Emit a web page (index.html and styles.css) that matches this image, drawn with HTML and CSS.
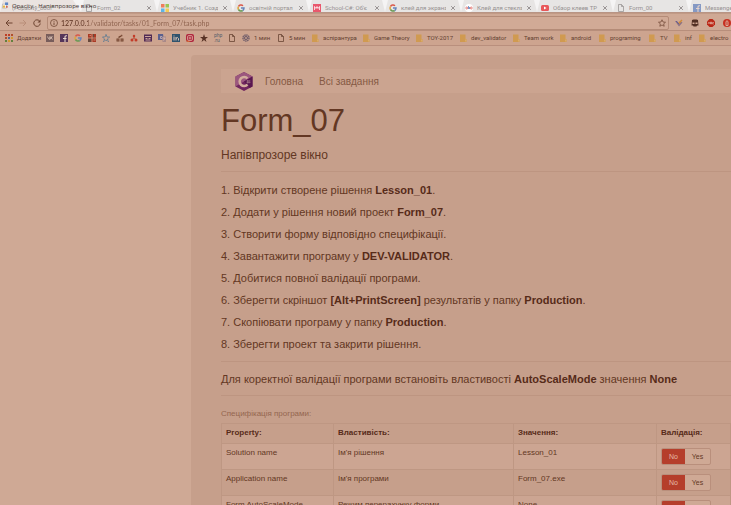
FILE: index.html
```html
<!DOCTYPE html>
<html lang="uk">
<head>
<meta charset="utf-8">
<title>Form_07</title>
<link rel="stylesheet" href="styles.css">
</head>
<body>
<svg class="defs" aria-hidden="true">
  <symbol id="google" viewBox="0 0 16 16"><g fill="none" stroke-width="3"><path d="M3 5a6 6 0 0 1 9-1.500" stroke="#d9584a"/><path d="M3 5a6 6 0 0 0 0 6" stroke="#dfa53c"/><path d="M3 11a6 6 0 0 0 8.500 2" stroke="#6b9a55"/><path d="M8 8.200h6c0 2-1 4-2.500 5" stroke="#6684ba"/></g></symbol>
  <symbol id="page" viewBox="0 0 16 16"><path d="M3 1h6l4 4v10H3zM9 1v4h4" fill="none" stroke="currentColor" stroke-width="1.500"/></symbol>
  <symbol id="folder" viewBox="0 0 16 16"><path d="M2 1h11v9h2v6H2z" fill="#d09a51"/><path d="M12 11h3v4h-3z" fill="#d9ac68"/></symbol>
  <symbol id="facebook" viewBox="0 0 16 16"><path d="M0 0h16v16H0z" fill="currentColor"/><path d="M10 16V9h3M6 9h4V6q0-3 4-2.500" fill="none" stroke="#e6d3cb" stroke-width="2.200"/></symbol>
  <symbol id="close" viewBox="0 0 8 8"><path d="M1.500 1.500l5 5m0-5l-5 5" stroke="currentColor" stroke-width="1.300"/></symbol>
</svg>

<header class="browser">
  <p class="window-title"><svg viewBox="0 0 16 16"><path d="M1 5h9v9H1z" fill="#fff" stroke="#8a8a8a"/><path d="M7 1h7v6H7z" fill="#5b86c8"/><path d="M2 8h5v5H2z" fill="#e5b541"/><path d="M9 9h4v4H9z" fill="#cf6755"/></svg>Opacity - Напівпрозоре вікно</p>
  <nav class="tabs" aria-label="Вкладки">
    <div class="tab tab-active"><span>(Popacity_bool</span></div>
    <div class="tab"><svg><use href="#page"/></svg><span>Form_02</span><button aria-label="Закрити"><svg><use href="#close"/></svg></button></div>
    <div class="tab"><svg viewBox="0 0 16 16"><path d="M0 0h7v7H0z" fill="#ef7d5a"/><path d="M9 0h7v7H9z" fill="#9cc653"/><path d="M0 9h7v7H0z" fill="#5eb5e6"/><path d="M9 9h7v7H9z" fill="#f5cb55"/></svg><span>Учебник 1. Созд</span><button aria-label="Закрити"><svg><use href="#close"/></svg></button></div>
    <div class="tab"><svg><use href="#google"/></svg><span>освітній портал</span><button aria-label="Закрити"><svg><use href="#close"/></svg></button></div>
    <div class="tab"><svg viewBox="0 0 16 16"><path d="M0 0h16v16H0z" fill="#e9586d"/><path d="M3 12V5l3 4 2-4 2 4 3-4v7" fill="none" stroke="#fff" stroke-width="1.500"/></svg><span>School-C#: Об'є</span><button aria-label="Закрити"><svg><use href="#close"/></svg></button></div>
    <div class="tab"><svg><use href="#google"/></svg><span>клей для экрана</span><button aria-label="Закрити"><svg><use href="#close"/></svg></button></div>
    <div class="tab"><svg viewBox="0 0 16 16"><circle cx="8" cy="8" r="8" fill="#fff"/><circle cx="3.500" cy="8" r="2" fill="none" stroke="#dd5d55" stroke-width="1.500"/><path d="M7 4v6M9 10V6" stroke="#5377b8" stroke-width="1.500"/><circle cx="12.500" cy="8" r="2" fill="none" stroke="#dd5d55" stroke-width="1.500"/></svg><span>Клей для стекла</span><button aria-label="Закрити"><svg><use href="#close"/></svg></button></div>
    <div class="tab"><svg viewBox="0 0 16 16"><rect y="2" width="16" height="12" rx="3" fill="#e8585a"/><path d="M6 5l5 3-5 3z" fill="#fff"/></svg><span>Обзор клеев ТР</span><button aria-label="Закрити"><svg><use href="#close"/></svg></button></div>
    <div class="tab"><svg><use href="#page"/></svg><span>Form_00</span><button aria-label="Закрити"><svg><use href="#close"/></svg></button></div>
    <div class="tab tab-last"><svg class="fb-light"><use href="#facebook"/></svg><span>Messenger</span></div>
  </nav>

  <div class="toolbar">
    <button aria-label="Назад"><svg viewBox="0 0 16 16"><path d="M15 8H2m6-6L2 8l6 6" fill="none" stroke="currentColor" stroke-width="2"/></svg></button>
    <button class="dim" aria-label="Вперед"><svg viewBox="0 0 16 16"><path d="M1 8h13M8 2l6 6-6 6" fill="none" stroke="currentColor" stroke-width="2"/></svg></button>
    <button aria-label="Оновити"><svg viewBox="0 0 16 16"><path d="M13 4a6.500 6.500 0 1 0 1.500 5" fill="none" stroke="currentColor" stroke-width="2"/><path d="M15 1v6H9z" fill="currentColor"/></svg></button>
    <div class="address">
      <svg viewBox="0 0 16 16"><circle cx="8" cy="8" r="7" fill="none" stroke="currentColor" stroke-width="1.500"/><path d="M8 7v5M8 4v1.500" stroke="currentColor" stroke-width="1.800"/></svg>
      <input type="text" aria-label="Адреса" value="127.0.0.1/validator/tasks/01_Form_07/task.php">
      <button aria-label="Додати закладку"><svg viewBox="0 0 16 16"><path d="M8 1.500l2 4.500 5 .5-3.700 3.200 1.100 4.800L8 12l-4.400 2.500 1.100-4.800L1 6.500 6 6z" fill="none" stroke="currentColor" stroke-width="1.400"/></svg></button>
    </div>
    <div class="extensions">
      <svg viewBox="0 0 16 16"><path d="M0 4l8 11 7-8-5-2-2 4-4-5z" fill="#8a7186"/><path d="M6 8l7-7 2 2-7 8z" fill="#d08b3c"/><path d="M2 4l6 6" stroke="#665e91" stroke-width="2"/></svg>
      <svg viewBox="0 0 16 16"><path d="M2 2l3-1h6l3 1 1 11h-3l-1 2H5l-1-2H1z" fill="#522f23"/><path d="M3 7h4v3H3zM9 7h4v3H9z" fill="#d5ab96"/></svg>
      <svg viewBox="0 0 16 16"><path d="M5 0h6l5 5v6l-5 5H5l-5-5V5z" fill="#ba2717"/><path d="M2 10l2-4 2 4m1-4v4h2V8H7h2V6H7m7 1h-3v3h3" fill="none" stroke="#e5b9a8" stroke-width="1.200"/></svg>
      <svg viewBox="0 0 16 16"><circle cx="8" cy="8" r="8" fill="#c73021"/><path d="M6 13V5q2-3 4 0v8z" fill="none" stroke="#dbaa98" stroke-width="2"/></svg>
    </div>
  </div>

  <nav class="bookmarks" aria-label="Закладки">
    <a href="#"><svg viewBox="0 0 16 16"><path d="M0 0h4v4H0zM6 0h4v4H6z" fill="#bd3f27"/><path d="M12 0h4v4h-4zM0 6h4v4H0z" fill="#b14f2b"/><path d="M6 6h4v4H6z" fill="#54678e"/><path d="M12 6h4v4h-4zM6 12h4v4H6z" fill="#d39a2f"/><path d="M0 12h4v4H0zM12 12h4v4h-4z" fill="#63803d"/></svg>Додатки</a>
    <a href="#" aria-label="VK"><svg viewBox="0 0 16 16"><path d="M0 0h16v16H0z" fill="#785d5b"/><path d="M3 5q2 6 5 6V5v4q3-1 4-4-1 3-2 3 2 0 3 3" fill="none" stroke="#dec5b9" stroke-width="1.600"/></svg></a>
    <a href="#" aria-label="Facebook"><svg class="fb-dark"><use href="#facebook"/></svg></a>
    <a href="#" aria-label="Google"><svg><use href="#google"/></svg></a>
    <a href="#" aria-label="Сітка"><svg viewBox="0 0 16 16"><path d="M0 0h16v16H0z" fill="#aa3a25"/><path d="M0 9h7v7H0zM10 0h2v9h-2z" fill="#67483b"/><path d="M8 0v16M0 8h16M11 12h4M3 3h3" stroke="#d3a38c" stroke-width="1.500"/></svg></a>
    <a href="#" aria-label="Зірка"><svg viewBox="0 0 16 16"><path d="M8 1l2 5h5l-4 4 2 5-5-3-5 3 2-5-4-4h5z" fill="none" stroke="#577993" stroke-width="2" stroke-dasharray="3 1"/></svg></a>
    <a href="#" aria-label="Розклад"><svg viewBox="0 0 16 16"><path d="M1 9h6v6H1zM9 9h6v6H9zM4 6l8-5 1 3-7 4" fill="#70442f"/><path d="M2 12h12M7 1l6 5" stroke="#c8937c"/></svg></a>
    <a href="#" aria-label="Дерево"><svg viewBox="0 0 16 16"><path d="M8 3v4M4 12l4-5 4 5" stroke="#bb4c35" stroke-width="2" fill="none"/><circle cx="8" cy="4" r="2.500" fill="#c33c29"/><circle cx="4" cy="12" r="3" fill="#c33c29"/><circle cx="12" cy="12" r="3" fill="#c33c29"/></svg></a>
    <a href="#" aria-label="Таблиця"><svg viewBox="0 0 16 16"><path d="M0 1h16v14H0z" fill="#512a54"/><path d="M2 5h12M3 9h4M9 9h4M3 12h10" stroke="#d9afa1" stroke-width="1.800"/></svg></a>
    <a href="#" aria-label="Перекладач"><svg viewBox="0 0 16 16"><path d="M0 0h10l2 12H0z" fill="#5b608e"/><path d="M8 5h8v11H9z" fill="#a98988"/><path d="M8 5H5v4h3V7m2 1h5m-4 5l3-5" fill="none" stroke="#dbc2bd" stroke-width="1.400"/></svg></a>
    <a href="#" aria-label="LinkedIn"><svg viewBox="0 0 16 16"><path d="M0 0h16v16H0z" fill="#30536d"/><path d="M4 6v7M4 3v2M8 13V6m0 3q3-4 5 0v4" fill="none" stroke="#dec5b9" stroke-width="2"/></svg></a>
    <a href="#" aria-label="Instagram"><svg viewBox="0 0 16 16"><rect width="16" height="16" rx="4" fill="#af263e"/><path d="M0 12l9 4H3z" fill="#d67132"/><rect x="3" y="3" width="10" height="10" rx="3" fill="none" stroke="#dfb4a3" stroke-width="1.500"/><circle cx="8" cy="8" r="2" fill="none" stroke="#dfb4a3" stroke-width="1.500"/></svg></a>
    <a href="#" aria-label="Обране"><svg viewBox="0 0 16 16"><path d="M8 0l2 6h6l-5 4 2 6-5-4-5 4 2-6-5-4h6z" fill="#573124"/></svg></a>
    <a class="php" href="#">php<br>.ru</a>
    <a href="#" aria-label="Сторінка"><svg><use href="#page"/></svg></a>
    <a href="#"><svg viewBox="0 0 16 16"><circle cx="8" cy="8" r="6" fill="none" stroke="#75616b" stroke-width="3" stroke-dasharray="3 1"/><circle cx="8" cy="8" r="3" fill="none" stroke="#685767" stroke-width="2"/></svg>1 мин</a>
    <a href="#"><svg><use href="#page"/></svg>5 мин</a>
    <a href="#"><svg><use href="#folder"/></svg>аспірантура</a>
    <a href="#"><svg><use href="#folder"/></svg>Game Theory</a>
    <a href="#"><svg><use href="#folder"/></svg>TOY-2017</a>
    <a href="#"><svg><use href="#folder"/></svg>dev_validator</a>
    <a href="#"><svg><use href="#folder"/></svg>Team work</a>
    <a href="#"><svg><use href="#folder"/></svg>android</a>
    <a href="#"><svg><use href="#folder"/></svg>programing</a>
    <a href="#"><svg><use href="#folder"/></svg>TV</a>
    <a href="#"><svg><use href="#folder"/></svg>inf</a>
    <a href="#"><svg><use href="#folder"/></svg>electro</a>
  </nav>
</header>

<main class="container">
  <nav class="navbar">
    <a href="#" aria-label="C#"><svg class="logo" viewBox="0 0 36 38"><path d="M18 0l17 9v20l-17 9-17-9V9z" fill="#70255e"/><path d="M18 0l17 9L1 29V9z" fill="#9b577e"/><path d="M35 9v20l-6 3-11-13z" fill="#591750"/><path d="M25 13a9 9 0 1 0 0 12" fill="none" stroke="#d3ad9d" stroke-width="5"/><path d="M25 16v7m3-7v7m-5-5h8m-8 3h8" stroke="#b58a92" stroke-width="1"/></svg></a>
    <a href="#">Головна</a>
    <a href="#">Всі завдання</a>
  </nav>
  <h1>Form_07</h1>
  <p class="subtitle">Напівпрозоре вікно</p>
  <hr>
  <div class="steps">
    <p>1. Відкрити створене рішення <b>Lesson_01</b>.</p>
    <p>2. Додати у рішення новий проект <b>Form_07</b>.</p>
    <p>3. Створити форму відповідно специфікації.</p>
    <p>4. Завантажити програму у <b>DEV-VALIDATOR</b>.</p>
    <p>5. Добитися повної валідації програми.</p>
    <p>6. Зберегти скріншот <b>[Alt+PrintScreen]</b> результатів у папку <b>Production</b>.</p>
    <p>7. Скопіювати програму у папку <b>Production</b>.</p>
    <p>8. Зберегти проект та закрити рішення.</p>
  </div>
  <hr>
  <p class="note">Для коректної валідації програми встановіть властивості <b>AutoScaleMode</b> значення <b>None</b></p>
  <hr>
  <table>
    <caption>Специфікація програми:</caption>
    <colgroup><col class="c-prop"><col class="c-name"><col class="c-value"><col></colgroup>
    <thead><tr><th>Property:</th><th>Властивість:</th><th>Значення:</th><th>Валідація:</th></tr></thead>
    <tbody>
      <tr><td>Solution name</td><td>Ім'я рішення</td><td>Lesson_01</td><td><div class="toggle"><button class="no">No</button><button>Yes</button></div></td></tr>
      <tr><td>Application name</td><td>Ім'я програми</td><td>Form_07.exe</td><td><div class="toggle"><button class="no">No</button><button>Yes</button></div></td></tr>
      <tr><td>Form AutoScaleMode</td><td>Режим перерахунку форми</td><td>None</td><td><div class="toggle"><button class="no">No</button><button>Yes</button></div></td></tr>
    </tbody>
  </table>
</main>
</body>
</html>
```
FILE: styles.css
```css
* { box-sizing: border-box; }

html, body { height: 100%; }

body {
  margin: 0;
  overflow: hidden;
  display: flex;
  flex-direction: column;
  background: #cfa995;
  color: #633723;
  font-family: "Liberation Sans", Arial, sans-serif;
}

p { margin: 0; }
a { color: inherit; text-decoration: none; }
svg { display: block; flex: none; width: 8px; height: 8px; }
button { padding: 0; border: 0; background: none; color: inherit; font: inherit; }
.defs { position: absolute; width: 0; height: 0; }

/* Browser chrome */
.browser {
  position: relative;
  flex: none;
  font: 6px/8px Roboto, "Open Sans", sans-serif;
  white-space: nowrap;
}

.window-title {
  position: absolute;
  top: 2px;
  left: 2px;
  z-index: 1;
  display: flex;
  gap: 3px;
  color: #41332f;
  font-family: "Open Sans", sans-serif;
}
.window-title svg { width: 7px; height: 7px; }

.tabs {
  display: flex;
  height: 13px;
  overflow: hidden;
  background: #f5f4f4;
  border-bottom: 1px solid #b89484;
  color: #969191;
}
.tab {
  display: flex;
  flex: none;
  align-items: center;
  gap: 4px;
  width: 76px;
  padding: 3px 5px 0 4px;
  background: #e7e5e4;
  clip-path: polygon(3px 0, 73px 0, 100% 100%, 0 100%);
}
.tab-active { width: 81px; padding-left: 12px; background: #eae3e0; }
.tab-last { flex: 1; padding-right: 0; clip-path: polygon(3px 0, 100% 0, 100% 100%, 0 100%); }
.tab span { flex: 1; overflow: hidden; }
.tab button svg { width: 6px; height: 6px; }
.fb-light { color: #8599c4; }
.fb-dark { color: #55355a; }

.toolbar {
  display: flex;
  align-items: center;
  gap: 6px;
  height: 17px;
  padding: 2px 0 0 5px;
  border-top: 1px solid #c19a86;
  color: #6c4330;
}
.dim { color: #b98e79; }
.address {
  display: flex;
  flex: 1;
  align-items: center;
  gap: 3px;
  height: 14px;
  padding: 0 2px;
  border: 1px solid #b48b77;
  border-radius: 2px;
  background: #d1aa96;
}
.address input {
  flex: 1;
  min-width: 0;
  padding: 0;
  border: 0;
  outline: 0;
  background: linear-gradient(90deg, #552b1b 27px, #8d614d 27px);
  background-clip: text;
  -webkit-text-fill-color: transparent;
  font: 7px/10px Lato, Roboto, sans-serif;
}
.extensions { display: flex; gap: 8px; width: 56px; overflow: hidden; }

.bookmarks {
  display: grid;
  grid-template-columns: 41px repeat(14, 14px) 35px 34px 51px 53px 44px 53px 47px 39px 50px 25px 25px 30px;
  align-items: center;
  height: 16px;
  padding-left: 5px;
  overflow: hidden;
  border-top: 1px solid #b78e7b;
  border-bottom: 1px solid #b98f7d;
  background: #cda48f;
  color: #63402f;
}
.bookmarks a { display: flex; align-items: center; gap: 4px; }
.bookmarks .php { display: block; font-size: 5px; line-height: 5px; color: #56606b; }

/* Page */
.container {
  flex: none;
  margin: 9px 0 0 191px;
  padding: 14px 0 0 30px;
  border-radius: 4px 0 0 0;
  background: #c69f8b;
}
.navbar {
  display: flex;
  align-items: center;
  gap: 16px;
  height: 24px;
  padding-left: 14px;
  background: #cba490;
  color: #855943;
  font-size: 10px;
}
.navbar a:first-child { margin-right: -4px; }
.logo { width: 18px; height: 19px; }

h1 { margin: 10px 0; font-size: 31px; line-height: 36px; font-weight: 400; }
.subtitle { margin-bottom: 10px; font-size: 12px; line-height: 12px; }
hr { height: 1px; margin: 6px 0 7px; border: 0; background: #bd9581; }
.steps, .note { font-size: 11px; line-height: 22px; }
.note { line-height: 20px; }
b, th { color: #572b19; font-weight: 700; }

table { width: 100%; border-collapse: collapse; table-layout: fixed; font-size: 8px; line-height: 10px; }
caption { padding: 6px 0 4px; color: #94664f; text-align: left; }
.c-prop { width: 112px; }
.c-name { width: 180px; }
.c-value { width: 143px; }
th, td { padding: 4px; border: 1px solid #be9783; text-align: left; vertical-align: top; }
th { padding-bottom: 5px; }
tbody tr:nth-child(odd) { background: #cca592; }

.toggle {
  display: inline-flex;
  height: 17px;
  overflow: hidden;
  border: 1px solid #b98f7c;
  border-radius: 2px;
  vertical-align: top;
  background: #cfa995;
  font-size: 7px;
}
.toggle button { width: 25px; }
.toggle .no { width: 23px; background: #b53e2b; color: #e5b8a7; }
```
